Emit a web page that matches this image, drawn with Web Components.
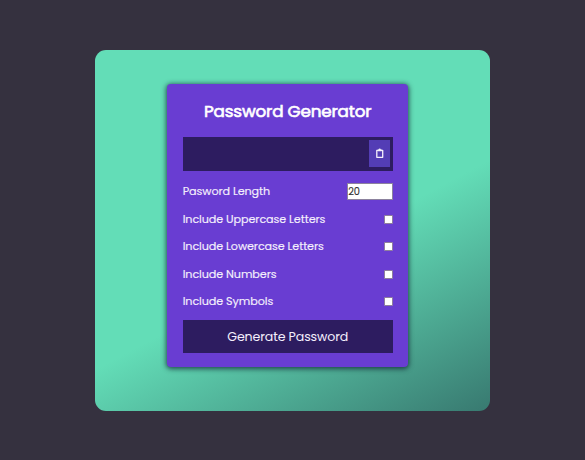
<!DOCTYPE html>
<html lang="en">
<head>
<meta charset="utf-8">
<title>Password Generator</title>
<style>
html,body{margin:0;height:100%}
body{background:#35313f;overflow:hidden}
</style>
</head>
<body>
<generator-stage>
  <generator-card>
    <span slot="title">Password Generator</span>
    <password-display></password-display>
    <setting-row>Pasword Length<length-input slot="control">20</length-input></setting-row>
    <setting-row>Include Uppercase Letters<check-box slot="control"></check-box></setting-row>
    <setting-row>Include Lowercase Letters<check-box slot="control"></check-box></setting-row>
    <setting-row>Include Numbers<check-box slot="control"></check-box></setting-row>
    <setting-row>Include Symbols<check-box slot="control"></check-box></setting-row>
    <generate-button>Generate Password</generate-button>
  </generator-card>
</generator-stage>
<script>
const define = (name, html) => customElements.define(name, class extends HTMLElement {
  constructor() {
    super();
    this.attachShadow({mode: 'open'}).innerHTML = html;
  }
});

define('generator-stage', `<style>
:host{display:flex;height:100vh;box-sizing:border-box;padding:49.6px 95px 49.5px 94.7px;font-family:Poppins,Inter,"Open Sans",sans-serif;color:#f4effc}
.panel{flex:1;display:flex;align-items:flex-start;box-sizing:border-box;padding:34px 82px 43px 72.5px;border-radius:11px;background:linear-gradient(152deg,#63ddb7 56%,#387970 100%)}
</style><div class="panel"><slot></slot></div>`);

define('generator-card', `<style>
:host{display:flex;flex-direction:column;flex:1;height:283.6px;box-sizing:border-box;padding:0 15.3px 14.6px 15.5px;border-radius:4px;background:#693dd2;box-shadow:0 1px 5px 1px rgba(16,35,48,.75)}
header{height:53.4px;display:flex;align-items:center;justify-content:center;padding-top:2px;box-sizing:border-box;font-size:16.8px;letter-spacing:-.18px;color:#fff;-webkit-text-stroke:.65px #fff}
</style><header><slot name="title"></slot></header><slot></slot>`);

define('password-display', `<style>
:host{display:flex;justify-content:flex-end;flex:none;height:34.2px;box-sizing:border-box;padding:2.8px 2.5px 3.8px;margin-bottom:6.6px;background:#2d1c60}
button{width:21px;padding:0;border:0;background:#533db5;display:flex;align-items:center;justify-content:center}
svg{display:block;width:9px;height:11px}
</style><button aria-label="Copy"><svg viewBox="0 0 9 11"><path d="M1.8 2.3h5.9v7h-5.9z" fill="none" stroke="#f4effc" stroke-width="1.3" stroke-linejoin="round"/><path d="M2.7 1.5h.9a1.1 1.1 0 0 1 2.2 0h.9v1.7h-4z" fill="#f4effc"/></svg></button>`);

define('setting-row', `<style>
:host{display:flex;align-items:center;justify-content:space-between;flex:none;height:27.5px;font-size:11.2px;letter-spacing:-.09px;-webkit-text-stroke:.15px #f4effc}
</style><span><slot></slot></span><slot name="control"></slot>`);

define('length-input', `<style>
:host{display:flex;align-items:center;width:46px;height:17px;box-sizing:border-box;border:1px solid #8c829e;padding-left:.5px;background:#fff;color:#333;font-size:9.8px;letter-spacing:-.2px;-webkit-text-stroke:.15px #333}
</style><slot></slot>`);

define('check-box', `<style>
:host{display:block;width:9px;height:9px;box-sizing:border-box;border:1px solid #8f7f9c;border-radius:1px;background:#fff}
</style>`);

define('generate-button', `<style>
:host{display:flex;align-items:center;justify-content:center;flex:none;height:32.4px;box-sizing:border-box;padding-top:1px;margin-top:auto;background:#2d1c60;font-size:12.6px;letter-spacing:-.12px}
</style><slot></slot>`);
</script>
</body>
</html>
